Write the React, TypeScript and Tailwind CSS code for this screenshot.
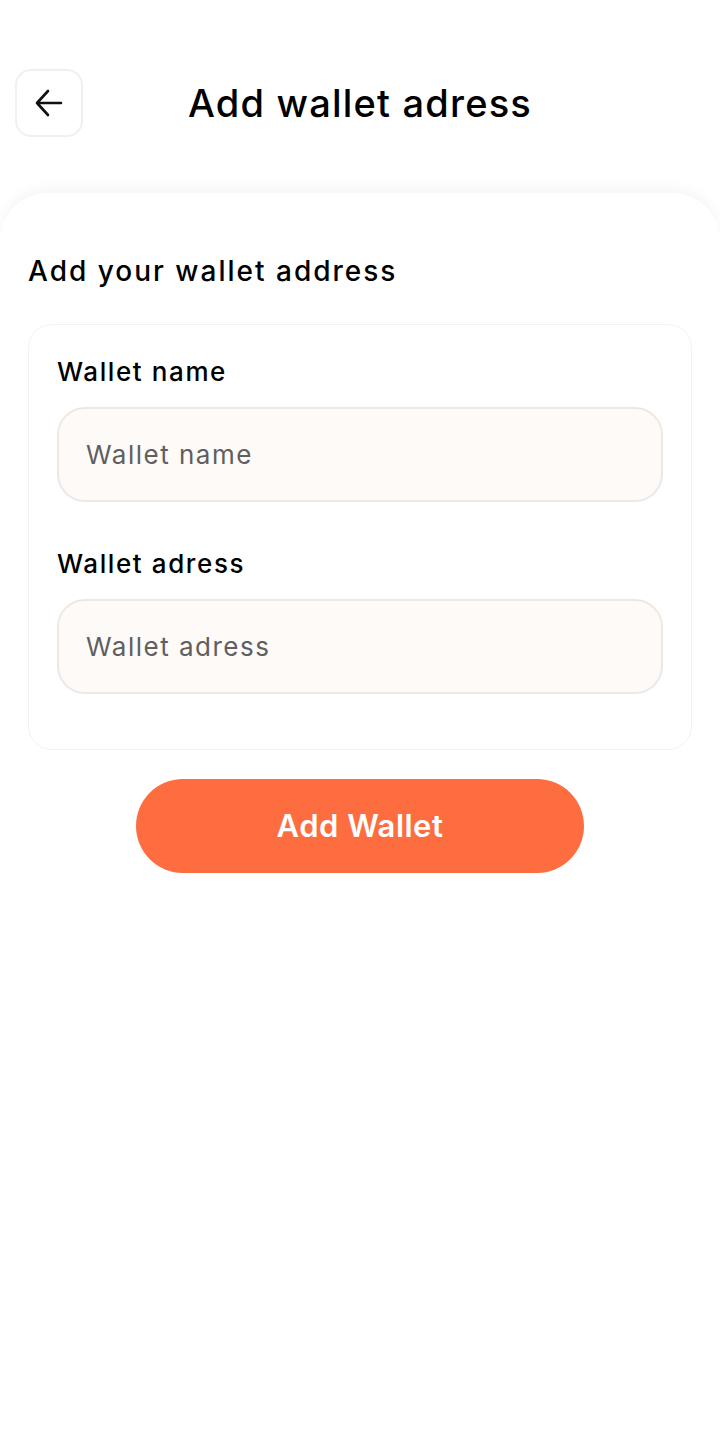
import React from 'react';

const font = { fontFamily: '"Inter", "Noto Sans", sans-serif' };

function BackArrow() {
    return (
        <svg width="30" height="30" viewBox="0 0 30 30" fill="none">
            <path d="M27 15H3M14 3L3 15L14 27" stroke="#111" strokeWidth="2.6" strokeLinecap="round" strokeLinejoin="round" />
        </svg>
    );
}

function Field({ label, placeholder }: { label: string; placeholder: string }) {
    return (
        <div className="flex flex-col">
            <label className="text-[26px] leading-[30px] font-medium text-black tracking-[1.6px]">{label}</label>
            <input
                placeholder={placeholder}
                className="mt-[20px] h-[95px] w-full rounded-[28px] border-2 border-[#ece8e5] bg-[#fefaf7] px-[27px] text-[26px] tracking-[1.5px] text-[#555] placeholder:text-[#5f5f5f] outline-none"
            />
        </div>
    );
}

export default function App() {
    return (
        <div className="min-h-[1435px] w-[720px] bg-white" style={font}>
            {/* header */}
            <div className="flex items-center pt-[69px] pl-[15px] pr-[15px]">
                <button className="flex h-[68px] w-[68px] items-center justify-center rounded-[16px] border-2 border-[#f0f0f0] bg-white">
                    <BackArrow />
                </button>
                <h1 className="flex-1 pr-[68px] text-center text-[38px] leading-[68px] font-medium text-black tracking-[1.2px]">
                    Add wallet adress
                </h1>
            </div>

            {/* sheet */}
            <div className="mt-[56px] rounded-t-[48px] bg-white px-[28px] pt-[60px] shadow-[0_-6px_12px_rgba(0,0,0,0.035)]">
                <h2 className="text-[28px] leading-[36px] font-medium text-black tracking-[2px]">Add your wallet address</h2>

                <div className="mt-[35px] flex flex-col gap-[47px] rounded-[24px] border border-[#f2f2f2] px-[28px] pt-[32px] pb-[55px]">
                    <Field label="Wallet name" placeholder="Wallet name" />
                    <Field label="Wallet adress" placeholder="Wallet adress" />
                </div>

                <div className="mt-[29px] flex justify-center">
                    <button className="h-[94px] w-[448px] rounded-full bg-[#fe6d40] text-[31px] font-semibold text-white tracking-[0.5px]">
                        Add Wallet
                    </button>
                </div>
            </div>
        </div>
    );
}
